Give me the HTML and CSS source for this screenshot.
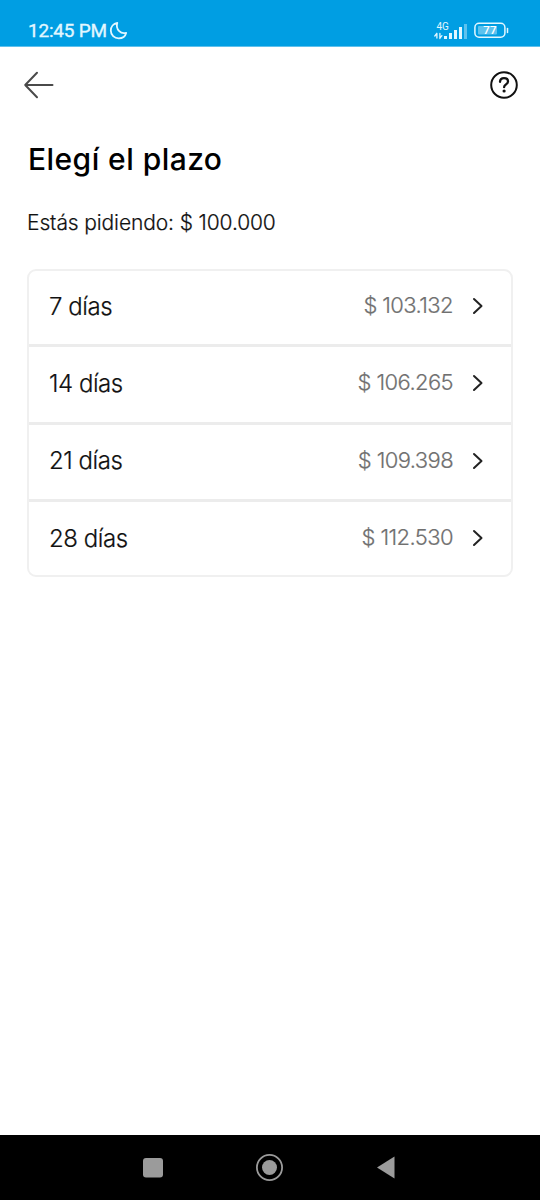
FILE: index.html
```
<!DOCTYPE html>
<html lang="es">
<head>
  <meta charset="UTF-8" />
  <meta name="viewport" content="width=device-width, initial-scale=1.0"/>
  <title>Elegí el plazo</title>
  <link rel="stylesheet" href="styles.css">
</head>
<body>

  <div class="status-bar">
    <span class="clock">12:45 PM</span>
    <svg class="moon" width="20" height="20" viewBox="0 0 20 20">
      <path d="M8.300 1.800C4.400 2.600 1.800 5.800 1.800 9.600c0 4.500 3.600 7.800 7.900 7.800 3.600 0 6.700-2.300 7.500-5.600-5.400 1.600-10.900-3.400-8.900-10z"/>
    </svg>
    <svg class="signal" width="34" height="20" viewBox="0 0 34 20">
      <text x="2.500" y="8.500">4G</text>
      <path d="M2.900 17v-4.500M5.900 12.500v5M0.800 15l2-2.500M5.900 17.200l2-2.500"/>
      <rect x="10" y="15" width="3" height="3"/>
      <rect x="15" y="12" width="3" height="6"/>
      <rect x="20" y="9" width="3" height="9"/>
      <rect x="25" y="6" width="3" height="12"/>
      <rect class="off" x="30" y="3" width="3" height="15"/>
    </svg>
    <svg class="battery" width="36" height="17" viewBox="0 0 36 17">
      <rect class="shell" x="0.900" y="1.200" width="30" height="14" rx="4.200"/>
      <rect class="level" x="4" y="4" width="19" height="8.500" rx="1"/>
      <path d="M33.500 6.500v4"/>
      <text x="15.900" y="12.300">77</text>
    </svg>
  </div>

  <header class="header">
    <svg class="back" width="32" height="28" viewBox="0 0 32 28">
      <path d="M14 1.800L2.200 14L14 26.200M2.200 14H29.500"/>
    </svg>
    <svg class="help" width="30" height="30" viewBox="0 0 30 30">
      <circle cx="15" cy="15" r="12.800"/>
      <path d="M11 11.900c.1-2.300 1.700-3.700 4-3.700s4 1.300 4 3.300c0 2.700-3.900 3-3.900 5.700"/>
      <circle class="dot" cx="15.100" cy="21" r="1.600"/>
    </svg>
  </header>

  <main class="content">
    <h1>Elegí el plazo</h1>
    <p class="amount">Estás pidiendo: <span>$ 100.000</span></p>

    <ul class="terms">
      <li>
        <span class="term">7 días</span>
        <span class="price">$ 103.132</span>
        <svg class="chevron" width="12" height="18" viewBox="0 0 12 18"><path d="M2 2l7.500 7L2 16"/></svg>
      </li>
      <li>
        <span class="term">14 días</span>
        <span class="price">$ 106.265</span>
        <svg class="chevron" width="12" height="18" viewBox="0 0 12 18"><path d="M2 2l7.500 7L2 16"/></svg>
      </li>
      <li>
        <span class="term">21 días</span>
        <span class="price">$ 109.398</span>
        <svg class="chevron" width="12" height="18" viewBox="0 0 12 18"><path d="M2 2l7.500 7L2 16"/></svg>
      </li>
      <li>
        <span class="term">28 días</span>
        <span class="price">$ 112.530</span>
        <svg class="chevron" width="12" height="18" viewBox="0 0 12 18"><path d="M2 2l7.500 7L2 16"/></svg>
      </li>
    </ul>
  </main>

  <nav class="nav-bar">
    <svg width="28" height="28" viewBox="0 0 28 28"><rect x="4" y="4" width="20" height="19.500" rx="3"/></svg>
    <svg width="28" height="28" viewBox="0 0 28 28">
      <circle class="ring" cx="13.500" cy="13.500" r="12.600"/>
      <circle cx="13.500" cy="13.500" r="7.500"/>
    </svg>
    <svg width="28" height="28" viewBox="0 0 28 28"><path d="M5 13.500L22.500 2.500v22z"/></svg>
  </nav>

</body>
</html>
```
FILE: styles.css
```
* {
  box-sizing: border-box;
}

body {
  margin: 0;
  height: 100vh;
  display: flex;
  flex-direction: column;
  background: #fff;
  color: #111;
  font-family: Inter, sans-serif;
  overflow: hidden;
}

svg {
  flex: none;
  fill: none;
  stroke-linecap: round;
  stroke-linejoin: round;
}

.status-bar {
  height: 47px;
  padding: 15px 30px 0 28px;
  display: flex;
  align-items: center;
  background: #009ee3;
  border-bottom: 1px solid #5fc0ec;
  color: #e2f7ff;
  font-family: Roboto, sans-serif;
}

.clock {
  font-size: 19px;
  font-weight: 400;
  letter-spacing: -0.2px;
  white-space: nowrap;
  -webkit-text-stroke: 0.35px #e2f7ff;
}

.moon {
  margin-left: 2px;
  stroke: #e2f7ff;
  stroke-width: 1.8;
}

.signal {
  margin-left: auto;
  fill: #e2f7ff;
}

.signal text {
  font-size: 10px;
}

.signal path {
  stroke: #e2f7ff;
  stroke-width: 1.3;
}

.signal .off {
  fill: #5cc2ee;
}

.battery {
  margin-left: 6px;
  stroke: #e2f7ff;
  stroke-width: 1.5;
}

.battery .level {
  fill: #5cc2ee;
  stroke: none;
}

.battery text {
  fill: #fff;
  stroke: none;
  font-size: 11.5px;
  font-weight: 500;
  text-anchor: middle;
}

.header {
  height: 76px;
  padding: 0 21px 0 22.5px;
  display: flex;
  align-items: center;
  justify-content: space-between;
}

.back {
  stroke: #4a4a4a;
  stroke-width: 2;
}

.help {
  stroke: #111;
  stroke-width: 2;
}

.help path {
  stroke-width: 2.3;
}

.help .dot {
  fill: #111;
  stroke: none;
}

.content {
  flex: 1;
  padding: 16px 27px 0;
}

h1 {
  margin: 0 0 0 1px;
  font-size: 30px;
  line-height: 40px;
  font-weight: 500;
  letter-spacing: 0.45px;
  color: #000;
}

.amount {
  margin: 28px 0 0;
  font-size: 21px;
  line-height: 32px;
  font-weight: 300;
  letter-spacing: -0.12px;
  -webkit-text-stroke: 0.2px #111;
}

.terms {
  width: 486px;
  margin: 30px 0 0;
  padding: 0;
  list-style: none;
  border: 2px solid #f0f0f0;
  border-radius: 9px;
}

.terms li {
  height: 77.5px;
  padding: 0 27px 2px 20px;
  display: flex;
  align-items: center;
  border-bottom: 3px solid #ececec;
}

.terms li:first-child {
  height: 76px;
  padding-bottom: 3px;
}

.terms li:last-child {
  height: 73px;
  padding-bottom: 1px;
  border-bottom: none;
}

.term {
  flex: 1;
  font-size: 24px;
  font-weight: 300;
  letter-spacing: -0.45px;
  -webkit-text-stroke: 0.2px #111;
}

.price {
  margin: 0 19px 2px 0;
  font-size: 22px;
  font-weight: 300;
  letter-spacing: -0.6px;
  color: #707070;
  -webkit-text-stroke: 0.2px #707070;
}

.chevron {
  stroke: #222;
  stroke-width: 2;
}

.nav-bar {
  height: 65px;
  padding: 0 140px 0 139px;
  display: flex;
  align-items: center;
  justify-content: space-between;
  background: #000;
}

.nav-bar svg {
  fill: #9b9b9b;
}

.nav-bar .ring {
  fill: none;
  stroke: #9b9b9b;
  stroke-width: 1.8;
}
```
